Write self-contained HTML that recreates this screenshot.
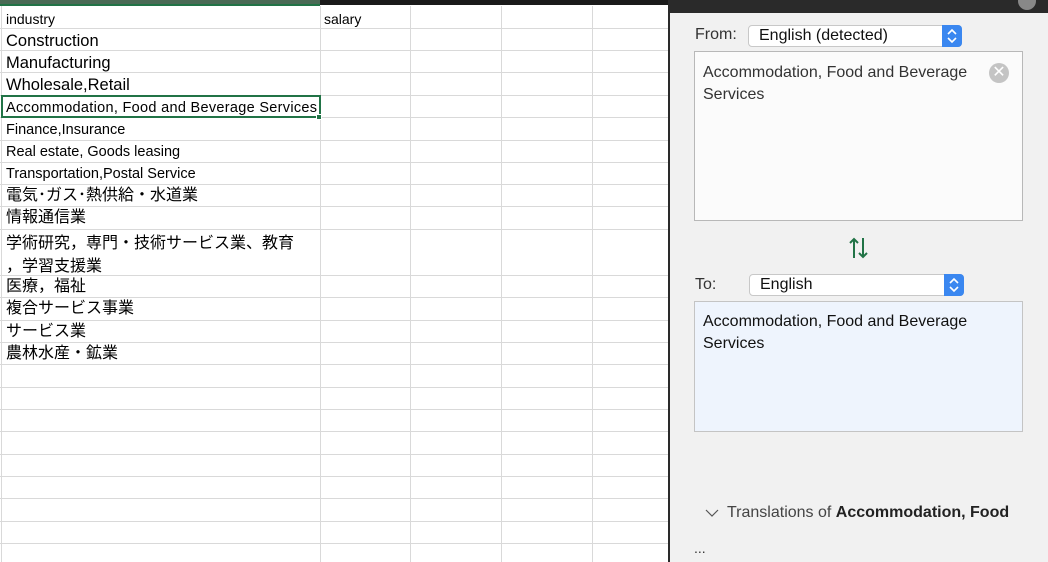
<!DOCTYPE html>
<html><head><meta charset="utf-8"><style>
*{margin:0;padding:0;box-sizing:border-box}
body{width:1048px;height:562px;overflow:hidden;background:#fff;position:relative;font-family:"Liberation Sans","Noto Sans CJK JP",sans-serif;color:#000}
.h{position:absolute;left:0;width:668px;height:1px;background:#d9d9d9}
.v{position:absolute;top:6px;bottom:0;width:1px;background:#d9d9d9}
.t{position:absolute;left:6px;white-space:nowrap;line-height:20px}
.panel{position:absolute;left:668px;top:0;width:380px;height:562px;background:#f1f1f1;border-left:2px solid #2a2a2a}
.ab{position:absolute;font-size:16px;color:#333;white-space:nowrap}
.sel{position:absolute;height:22px;background:#fff;border:1px solid #c8c8c8;border-radius:4px;font-size:16px;padding-left:10px;line-height:20px;color:#111}
.sel .st{position:absolute;right:-1px;top:-1px;width:20px;height:22px;background:#3a87f0;border-radius:0 4px 4px 0}
.j{font-size:16px}
</style></head><body>
<div style="position:absolute;left:0;top:0;width:320px;height:5px;background:#4a6a55"></div>
<div style="position:absolute;left:320px;top:0;width:348px;height:5px;background:#1a1a1a"></div>
<div style="position:absolute;left:0;top:4px;width:320px;height:2px;background:#217346"></div>
<div class="h" style="top:28px"></div><div class="h" style="top:50px"></div><div class="h" style="top:72px"></div><div class="h" style="top:95px"></div><div class="h" style="top:117px"></div><div class="h" style="top:140px"></div><div class="h" style="top:162px"></div><div class="h" style="top:184px"></div><div class="h" style="top:206px"></div><div class="h" style="top:229px"></div><div class="h" style="top:275px"></div><div class="h" style="top:297px"></div><div class="h" style="top:320px"></div><div class="h" style="top:342px"></div><div class="h" style="top:364px"></div><div class="h" style="top:387px"></div><div class="h" style="top:409px"></div><div class="h" style="top:431px"></div><div class="h" style="top:454px"></div><div class="h" style="top:476px"></div><div class="h" style="top:498px"></div><div class="h" style="top:521px"></div><div class="h" style="top:543px"></div>
<div class="v" style="left:1px"></div><div class="v" style="left:320px"></div><div class="v" style="left:410px"></div><div class="v" style="left:501px"></div><div class="v" style="left:592px"></div>
<div style="position:absolute;left:1px;top:95px;width:320px;height:23px;border:2px solid #217346"></div>
<div style="position:absolute;left:316px;top:114px;width:6px;height:6px;background:#217346;border:1px solid #fff"></div>
<div class="t" style="top:9px;font-size:14px">industry</div>
<div class="t" style="top:9px;left:324px;font-size:14px">salary</div>
<div class="t" style="top:31px;font-size:16.5px">Construction</div>
<div class="t" style="top:53px;font-size:16.5px">Manufacturing</div>
<div class="t" style="top:75px;font-size:16.5px">Wholesale,Retail</div>
<div class="t" style="top:98px;font-size:14.5px;letter-spacing:0.3px">Accommodation, Food and Beverage Services</div>
<div class="t" style="top:120px;font-size:14.5px">Finance,Insurance</div>
<div class="t" style="top:142px;font-size:14.5px">Real estate, Goods leasing</div>
<div class="t" style="top:164px;font-size:14.5px">Transportation,Postal Service</div>
<div class="t j" style="top:186px">電気･ガス･熱供給・水道業</div>
<div class="t j" style="top:208px">情報通信業</div>
<div class="t j" style="top:232px;line-height:23px">学術研究，専門・技術サービス業、教育<br>，学習支援業</div>
<div class="t j" style="top:277px">医療，福祉</div>
<div class="t j" style="top:299px">複合サービス事業</div>
<div class="t j" style="top:322px">サービス業</div>
<div class="t j" style="top:344px">農林水産・鉱業</div>

<div class="panel">
<div style="position:absolute;left:0;top:0;width:380px;height:13px;background:#2a2a2a"></div>
<div style="position:absolute;left:348px;top:-8px;width:18px;height:18px;border-radius:50%;background:#888"></div>
<div class="ab" style="left:25px;top:26px">From:</div>
<div class="sel" style="left:78px;top:25px;width:214px">English (detected)<div class="st"><svg width="20" height="22" viewBox="0 0 20 22"><path d="M6 9l4-4 4 4M6 13l4 4 4-4" stroke="#fff" stroke-width="1.6" fill="none"/></svg></div></div>
<div style="position:absolute;left:24px;top:51px;width:329px;height:170px;background:#fbfbfb;border:1px solid #b8b8b8"></div>
<div class="ab" style="left:33px;top:62px;line-height:22px;color:#333">Accommodation, Food and Beverage<br>Services</div>
<div style="position:absolute;left:319px;top:63px;width:20px;height:20px;border-radius:50%;background:#c4c4c4;color:#fff;font-size:16px;line-height:20px;text-align:center">✕</div>
<svg style="position:absolute;left:178px;top:236px" width="22" height="24" viewBox="0 0 22 24"><path d="M6 22V3M2 7l4-4 4 4M15 2v19M11 17l4 4 4-4" stroke="#217346" stroke-width="2" fill="none"/></svg>
<div class="ab" style="left:25px;top:276px">To:</div>
<div class="sel" style="left:79px;top:274px;width:215px">English<div class="st"><svg width="20" height="22" viewBox="0 0 20 22"><path d="M6 9l4-4 4 4M6 13l4 4 4-4" stroke="#fff" stroke-width="1.6" fill="none"/></svg></div></div>
<div style="position:absolute;left:24px;top:301px;width:329px;height:131px;background:#eef4fd;border:1px solid #c4c4c4"></div>
<div class="ab" style="left:33px;top:311px;line-height:22px;color:#111">Accommodation, Food and Beverage<br>Services</div>
<svg style="position:absolute;left:35px;top:508px" width="14" height="10" viewBox="0 0 14 10"><path d="M1 2l6 6 6-6" stroke="#555" stroke-width="1.2" fill="none"/></svg>
<div class="ab" style="left:57px;top:504px;font-size:16px;color:#444">Translations of <b style="color:#222">Accommodation, Food</b></div>
<div class="ab" style="left:24px;top:540px;font-size:14px">...</div>
</div>
</body></html>
